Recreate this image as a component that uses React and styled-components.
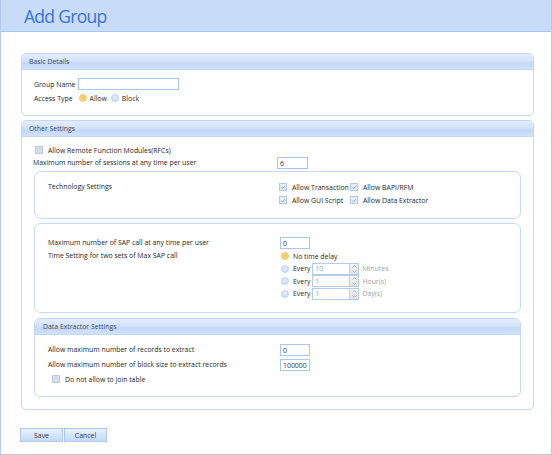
import React from "react";
import styled, { createGlobalStyle } from "styled-components";

const GlobalStyle = createGlobalStyle`
  html, body {
    margin: 0;
    padding: 0;
    background: #ffffff;
  }
  body {
    font-family: "Open Sans", "Liberation Sans", sans-serif;
    font-size: 6.9px;
    color: #262626;
  }
`;

export default function App() {
  return (
    <>
      <GlobalStyle />
      <Page>
        <Header>
          <h1>Add Group</h1>
        </Header>
        <Content>
          <Panel>
            <PanelHead>Basic Details</PanelHead>
            <BasicBody>
              <InlineRow>
                <span>Group Name</span>
                <TextInput $w={101} defaultValue="" />
              </InlineRow>
              <InlineRow>
                <span>Access Type</span>
                <Radio $checked $ml={3} />
                <span>Allow</span>
                <Radio $ml={1} />
                <span>Block</span>
              </InlineRow>
            </BasicBody>
          </Panel>

          <Panel>
            <PanelHead>Other Settings</PanelHead>
            <OtherBody>
              <CheckRow $mt={7} $ml={2}>
                <CheckBox />
                <span>Allow Remote Function Modules(RFCs)</span>
              </CheckRow>
              <FormGrid $col={244} $mt={1}>
                <Label>Maximum number of sessions at any time per user</Label>
                <TextInput $w={31} defaultValue="6" />
              </FormGrid>

              <Box $mt={2} $h={48} $pt={9}>
                <FormGrid $col={231}>
                  <Label $top>Technology Settings</Label>
                  <CheckGrid>
                    <CheckRow><CheckBox $checked /><span>Allow Transaction</span></CheckRow>
                    <CheckRow><CheckBox $checked /><span>Allow BAPI/RFM</span></CheckRow>
                    <CheckRow><CheckBox $checked /><span>Allow GUI Script</span></CheckRow>
                    <CheckRow><CheckBox $checked /><span>Allow Data Extractor</span></CheckRow>
                  </CheckGrid>
                </FormGrid>
              </Box>

              <Box $mt={4} $h={90} $pt={13}>
                <FormGrid $col={232} $gap={1}>
                  <Label>Maximum number of SAP call at any time per user</Label>
                  <TextInput $w={30} defaultValue="0" />
                  <Label $top>Time Setting for two sets of Max SAP call</Label>
                  <RadioList>
                    <RadioRow>
                      <Radio $checked />
                      <span>No time delay</span>
                    </RadioRow>
                    <RadioRow>
                      <Radio />
                      <span>Every</span>
                      <Spinner value="10" />
                      <Unit>Minutes</Unit>
                    </RadioRow>
                    <RadioRow>
                      <Radio />
                      <span>Every</span>
                      <Spinner value="1" />
                      <Unit>Hour(s)</Unit>
                    </RadioRow>
                    <RadioRow>
                      <Radio />
                      <span>Every</span>
                      <Spinner value="1" />
                      <Unit>Day(s)</Unit>
                    </RadioRow>
                  </RadioList>
                </FormGrid>
              </Box>

              <SubPanel>
                <PanelHead $pl={8}>Data Extractor Settings</PanelHead>
                <DataBody>
                  <FormGrid $col={232} $gap={3}>
                    <Label>Allow maximum number of records to extract</Label>
                    <TextInput $w={30} defaultValue="0" />
                    <Label>Allow maximum number of block size to extract records</Label>
                    <TextInput $w={30} defaultValue="100000" />
                  </FormGrid>
                  <CheckRow $mt={2} $ml={4}>
                    <CheckBox />
                    <span>Do not allow to join table</span>
                  </CheckRow>
                </DataBody>
              </SubPanel>
            </OtherBody>
          </Panel>

          <ButtonBar>
            <Button>Save</Button>
            <Button>Cancel</Button>
          </ButtonBar>
        </Content>
      </Page>
    </>
  );
}

function Spinner({ value }) {
  return (
    <SpinnerBox>
      <input value={value} readOnly disabled />
      <SpinButtons>
        <svg width="7" height="10" viewBox="0 0 7 10">
          <path d="M1.5 3.5 L3.5 1.5 L5.5 3.5" fill="none" stroke="#a8a8a8" strokeWidth="0.9" />
          <path d="M1.5 6.5 L3.5 8.5 L5.5 6.5" fill="none" stroke="#a8a8a8" strokeWidth="0.9" />
        </svg>
      </SpinButtons>
    </SpinnerBox>
  );
}

const Page = styled.div`
  width: 552px;
  height: 455px;
  box-sizing: border-box;
  border: 1px solid #b6cbed;
  border-top: none;
  display: flex;
  flex-direction: column;
  overflow: hidden;
`;

const Header = styled.header`
  height: 32px;
  flex: none;
  box-sizing: border-box;
  background: #c8dcfa;
  border-bottom: 1px solid #a9c5ef;
  display: flex;
  align-items: center;
  padding: 1px 0 0 23px;
  h1 {
    margin: 0;
    font-family: "Open Sans", "Liberation Sans", sans-serif;
    font-weight: 400;
    font-size: 17.5px;
    letter-spacing: -0.7px;
    color: #3a72d8;
  }
`;

const Content = styled.main`
  padding: 21px 0 0 20px;
  display: flex;
  flex-direction: column;
  gap: 4px;
`;

const Panel = styled.section`
  width: 513px;
  box-sizing: border-box;
  border: 1px solid #c4d7f4;
  border-radius: 5px;
  overflow: hidden;
  background: #ffffff;
`;

const SubPanel = styled(Panel)`
  width: 487px;
  margin: 5px 12px 0 1px;
  border-radius: 6px;
`;

const PanelHead = styled.div`
  height: 16px;
  box-sizing: border-box;
  display: flex;
  align-items: center;
  padding-left: ${(p) => p.$pl ?? 7}px;
  background: linear-gradient(#e3edfc 0%, #d3e3fb 45%, #c3d8f7 60%, #d0e1fa 100%);
  border-bottom: 1px solid #c4d7f4;
  color: #3d4b60;
`;

const BasicBody = styled.div`
  padding: 8px 0 11px 12px;
  display: flex;
  flex-direction: column;
  gap: 2px;
`;

const OtherBody = styled.div`
  padding: 0 0 12px 11px;
  display: flex;
  flex-direction: column;
`;

const DataBody = styled.div`
  padding: 9px 0 11px 13px;
`;

const InlineRow = styled.div`
  height: 12px;
  display: flex;
  align-items: center;
  gap: 3px;
`;

const CheckRow = styled.div`
  height: 12px;
  display: flex;
  align-items: center;
  gap: 5px;
  margin-top: ${(p) => p.$mt ?? 0}px;
  margin-left: ${(p) => p.$ml ?? 0}px;
  white-space: nowrap;
`;

const FormGrid = styled.div`
  display: grid;
  grid-template-columns: ${(p) => p.$col}px auto;
  row-gap: ${(p) => p.$gap ?? 0}px;
  align-items: center;
  margin-top: ${(p) => p.$mt ?? 0}px;
`;

const Label = styled.div`
  line-height: 12px;
  align-self: ${(p) => (p.$top ? "start" : "center")};
`;

const CheckGrid = styled.div`
  display: grid;
  grid-template-columns: 71px auto;
  row-gap: 1px;
`;

const Box = styled.div`
  height: ${(p) => p.$h}px;
  box-sizing: border-box;
  margin: ${(p) => p.$mt}px 12px 0 1px;
  padding: ${(p) => p.$pt}px 0 0 13px;
  border: 1px solid #c7d9f4;
  border-radius: 7px;
`;

const RadioList = styled.div`
  display: flex;
  flex-direction: column;
  gap: 0.5px;
`;

const RadioRow = styled.div`
  height: 12px;
  display: flex;
  align-items: center;
  gap: 4px;
  padding-left: 1px;
  & > span + div {
    margin-left: -2px;
  }
`;

const Unit = styled.span`
  color: #a3a3a3;
  margin-left: -1px;
`;

const TextInput = styled.input`
  width: ${(p) => p.$w}px;
  height: 12px;
  box-sizing: border-box;
  margin: 0;
  padding: 0 2px;
  border: 1px solid #a9c6f1;
  background: #ffffff;
  font-family: inherit;
  font-size: 6.9px;
  color: #333333;
  outline: none;
`;

const SpinnerBox = styled.div`
  width: 47px;
  height: 12px;
  box-sizing: border-box;
  border: 1px solid #b4cbee;
  display: flex;
  background: #ffffff;
  input {
    flex: 1;
    min-width: 0;
    border: none;
    padding: 0 2px;
    margin: 0;
    font-family: inherit;
    font-size: 6.9px;
    color: #a6a6a6;
    background: transparent;
  }
`;

const SpinButtons = styled.div`
  width: 8px;
  border-left: 1px solid #d0d0d0;
  background: linear-gradient(#f6f6f6, #e2e2e2);
  display: flex;
  align-items: center;
  justify-content: center;
`;

const Radio = styled.span`
  width: 8px;
  height: 8px;
  flex: none;
  box-sizing: border-box;
  border-radius: 50%;
  margin-left: ${(p) => p.$ml ?? 0}px;
  border: 1px solid ${(p) => (p.$checked ? "#ecc66d" : "#bfd3f3")};
  background: ${(p) =>
    p.$checked
      ? "radial-gradient(circle at 50% 45%, #f4c24b 0%, #f7d37a 55%, #fbe7b4 100%)"
      : "radial-gradient(circle at 50% 40%, #e6effc 0%, #cfe0f8 60%, #c3d7f5 100%)"};
`;

const CheckBox = ({ $checked }) => (
  <CheckSquare $checked={$checked}>
    {$checked && (
      <svg width="7" height="7" viewBox="0 0 7 7">
        <path d="M1.6 3.6 L3 5 L5.6 2" fill="none" stroke="#5e82b8" strokeWidth="0.9" />
      </svg>
    )}
  </CheckSquare>
);

const CheckSquare = styled.span`
  width: 8px;
  height: 8px;
  flex: none;
  box-sizing: border-box;
  display: flex;
  align-items: center;
  justify-content: center;
  border: 1px solid ${(p) => (p.$checked ? "#b2c8e8" : "#b9c9e0")};
  background: ${(p) => (p.$checked ? "#e6eefa" : "#d4deed")};
`;

const ButtonBar = styled.div`
  display: flex;
  gap: 1px;
  margin: 14px 0 0 -1px;
`;

const Button = styled.button`
  width: 43px;
  height: 14px;
  box-sizing: border-box;
  padding: 0;
  border: 1px solid #aec7ec;
  background: linear-gradient(#e9f1fd 0%, #d6e5fb 50%, #c5d9f6 100%);
  font-family: inherit;
  font-size: 6.9px;
  color: #333333;
`;
